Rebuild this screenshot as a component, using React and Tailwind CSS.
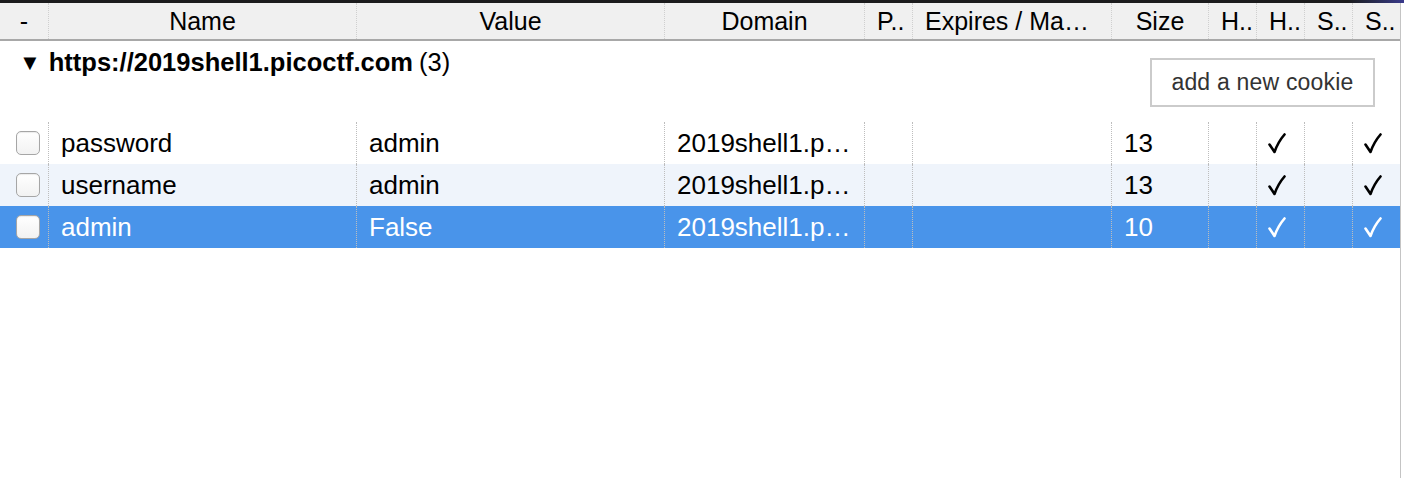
import React from "react";

const columns = [
  { key: "check", label: "-", width: "w-[49px]", align: "center" },
  { key: "name", label: "Name", width: "w-[308px]", align: "center" },
  { key: "value", label: "Value", width: "w-[308px]", align: "center" },
  { key: "domain", label: "Domain", width: "w-[200px]", align: "center" },
  { key: "path", label: "P..", width: "w-[48px]", align: "left" },
  { key: "expires", label: "Expires / Ma…", width: "w-[199px]", align: "left" },
  { key: "size", label: "Size", width: "w-[97px]", align: "center" },
  { key: "httpOnly", label: "H..", width: "w-[48px]", align: "left" },
  { key: "hostOnly", label: "H..", width: "w-[48px]", align: "left" },
  { key: "sameSite", label: "S..", width: "w-[48px]", align: "left" },
  { key: "secure", label: "S..", width: "w-[47px]", align: "left" },
];

const cookies = [
  { name: "password", value: "admin", domain: "2019shell1.p…", size: "13", hostOnly: true, secure: true },
  { name: "username", value: "admin", domain: "2019shell1.p…", size: "13", hostOnly: true, secure: true },
  { name: "admin", value: "False", domain: "2019shell1.p…", size: "10", hostOnly: true, secure: true },
];

const rowStyles = [
  "bg-white text-black",
  "bg-[#eff4fb] text-black",
  "bg-[#4994ea] text-white",
];

const Checkbox = () => (
  <div className="w-[24px] h-[24px] rounded-[5px] border border-[#a6a6a6] bg-gradient-to-b from-white to-[#f2f2f2] shadow-[inset_0_1px_1px_rgba(0,0,0,0.08)]" />
);

// heavier check mark like the mac system font one
const Check = () => (
  <svg width="18" height="21" viewBox="0 0 18 21" className="ml-[-1px]">
    <path
      d="M1.5 11.5 L6.5 19 Q10 9 16.5 1.5"
      fill="none"
      stroke="currentColor"
      strokeWidth="2.6"
      strokeLinejoin="round"
      strokeLinecap="round"
    />
  </svg>
);

const HeaderRow = () => (
  <div className="flex h-[38px] bg-[#f0f0f0] border-b-2 border-[#a8a8a8]">
    {columns.map((col, i) => (
      <div
        key={col.key}
        className={`${col.width} shrink-0 flex items-center pt-[2px] overflow-hidden whitespace-nowrap ${
          col.align === "center" ? "justify-center" : "pl-[12px]"
        } ${i < columns.length - 1 ? "border-r border-dotted border-[#cfcfcf]" : ""}`}
      >
        {col.label}
      </div>
    ))}
  </div>
);

const CookieRow = ({ cookie, index }) => {
  const cells = {
    check: <Checkbox />,
    name: cookie.name,
    value: cookie.value,
    domain: cookie.domain,
    path: "",
    expires: "",
    size: cookie.size,
    httpOnly: "",
    hostOnly: cookie.hostOnly ? <Check /> : "",
    sameSite: "",
    secure: cookie.secure ? <Check /> : "",
  };

  return (
    <div className={`flex h-[42px] ${rowStyles[index]}`}>
      {columns.map((col, i) => (
        <div
          key={col.key}
          className={`${col.width} shrink-0 flex items-center overflow-hidden whitespace-nowrap ${
            col.key === "check" ? "pl-[16px]" : "pl-[12px]"
          } ${i < columns.length - 1 ? "border-r border-dotted border-[#bdbdbd]" : ""}`}
        >
          {cells[col.key]}
        </div>
      ))}
    </div>
  );
};

export default function App() {
  return (
    <div className="w-[1404px] h-[478px] bg-white overflow-hidden font-['Liberation_Sans',Arial,sans-serif] text-black">
      <div className="h-[3px] bg-gradient-to-r from-[#1b1b1d] via-[#1b1b1d] via-[96%] to-[#3a3a8c]" />
      <div className="flex h-[475px]">
        <div className="w-[1400px] flex flex-col">
          <div className="text-[25px]">
            <HeaderRow />
          </div>

          <div className="flex justify-between items-start h-[81px] pl-[19px] pr-[25px]">
            <div className="mt-[2px] flex items-center">
              <span className="text-[22px] mr-[8px]">▼</span>
              <span className="text-[25.5px] font-bold">https://2019shell1.picoctf.com</span>
              <span className="text-[25.5px] ml-[6px]">(3)</span>
            </div>
            <button className="mt-[17px] h-[49px] w-[225px] border-2 border-[#cbcbcb] bg-white text-[23px] tracking-[0.2px] text-[#333333]">
              add a new cookie
            </button>
          </div>

          <div className="text-[26px]">
            {cookies.map((cookie, i) => (
              <CookieRow key={cookie.name} cookie={cookie} index={i} />
            ))}
          </div>
        </div>
        <div className="w-[1px] bg-[#c4c4c4]" />
        <div className="flex-1 bg-white" />
      </div>
    </div>
  );
}
